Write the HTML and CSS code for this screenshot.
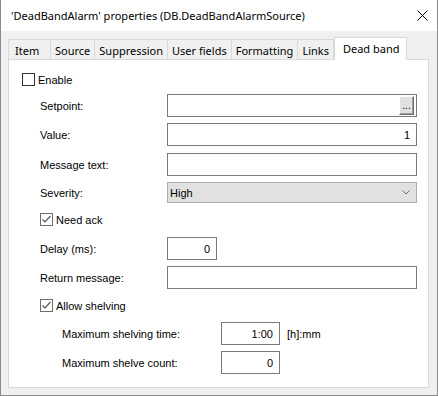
FILE: index.html
```html
<!DOCTYPE html>
<html lang="en">
<head>
  <meta charset="UTF-8" />
  <title>'DeadBandAlarm' properties</title>
  <link rel="stylesheet" href="styles.css">
</head>
<body>
  <div class="window">
    <div class="titlebar">
      <span class="title">'DeadBandAlarm' properties (DB.DeadBandAlarmSource)</span>
      <svg class="close" width="11" height="11" viewBox="0 0 11 11">
        <path d="M0.5 0.5L10.5 10.5M10.5 0.5L0.5 10.5" stroke="#000" stroke-width="1" fill="none" />
      </svg>
    </div>

    <div class="client">
      <div class="tabs">
        <div class="tab first">Item</div>
        <div class="tab">Source</div>
        <div class="tab">Suppression</div>
        <div class="tab">User fields</div>
        <div class="tab">Formatting</div>
        <div class="tab">Links</div>
        <div class="tab active">Dead band</div>
      </div>

      <div class="panel">
        <div class="row check-row">
          <span class="check"></span><span class="check-label">Enable</span>
        </div>

        <div class="row field-row gap-8">
          <label class="lbl">Setpoint:</label>
          <div class="input-wrap wide">
            <input type="text" class="bare" />
            <button type="button" class="browse">...</button>
          </div>
        </div>

        <div class="row field-row">
          <label class="lbl">Value:</label>
          <input type="text" class="input wide num" value="1" />
        </div>

        <div class="row field-row gap-7">
          <label class="lbl">Message text:</label>
          <input type="text" class="input wide" />
        </div>

        <div class="row combo-row">
          <label class="lbl">Severity:</label>
          <div class="combo wide">
            <span>High</span>
            <svg width="8" height="5" viewBox="0 0 8 5">
              <path d="M0.5 0.5L4 4L7.5 0.5" stroke="#6d6d6d" stroke-width="1" fill="none" />
            </svg>
          </div>
        </div>

        <div class="row check-row gap-10 indent">
          <span class="check on">
            <svg width="11" height="11" viewBox="0 0 11 11"><path d="M1.5 5.5L4 8L9.5 2" stroke="#555" stroke-width="1.2" fill="none" /></svg>
          </span><span class="check-label">Need ack</span>
        </div>

        <div class="row field-row gap-11">
          <label class="lbl">Delay (ms):</label>
          <input type="text" class="input short num" value="0" />
        </div>

        <div class="row field-row">
          <label class="lbl">Return message:</label>
          <input type="text" class="input wide" />
        </div>

        <div class="row check-row gap-10 indent">
          <span class="check on">
            <svg width="11" height="11" viewBox="0 0 11 11"><path d="M1.5 5.5L4 8L9.5 2" stroke="#555" stroke-width="1.2" fill="none" /></svg>
          </span><span class="check-label">Allow shelving</span>
        </div>

        <div class="row field-row gap-10">
          <label class="sub-lbl">Maximum shelving time:</label>
          <input type="text" class="input mid num" value="1:00" />
          <span class="unit">[h]:mm</span>
        </div>

        <div class="row field-row">
          <label class="sub-lbl">Maximum shelve count:</label>
          <input type="text" class="input mid num" value="0" />
        </div>
      </div>
    </div>
  </div>
</body>
</html>
```

FILE: styles.css
```css
body {
  margin: 0;
  font-family: "Liberation Sans", Arial, sans-serif;
  font-size: 11px;
  color: #000;
}

.window {
  width: 438px;
  height: 396px;
  box-sizing: border-box;
  border: 1px solid #8a8a8a;
  border-top: none;
  background: #f0f0f0;
  display: flex;
  flex-direction: column;
}

.titlebar {
  height: 31px;
  background: #fff;
  display: flex;
  align-items: center;
  justify-content: space-between;
  padding: 0 9px 0 10px;
}

.title {
  font-family: "Noto Sans", sans-serif;
  font-size: 11px;
}

.client {
  flex: 1;
  display: flex;
  flex-direction: column;
  padding: 6px 8px 7px 7px;
}

/* tab strip */
.tabs {
  display: flex;
  align-items: flex-end;
  height: 22px;
  position: relative;
  z-index: 1;
}

.tab {
  flex-shrink: 0;
  white-space: nowrap;
  height: 20px;
  box-sizing: border-box;
  border: 1px solid #d9d9d9;
  border-bottom: none;
  margin-left: -1px;
  padding: 1px 4px 0;
  display: flex;
  align-items: center;
  font-family: "Noto Sans", sans-serif;
  font-size: 11px;
  background: #f0f0f0;
}

.tab.first {
  margin-left: 0;
  width: 43px;
  padding-left: 6px;
}

.tab.active {
  height: 23px;
  margin-bottom: -1px;
  margin-left: 0;
  background: #fff;
  padding: 0 7px 2px 8px;
}

/* page */
.panel {
  flex: 1;
  box-sizing: border-box;
  border: 1px solid #d9d9d9;
  background: #fff;
  padding: 13px 0 0 13px;
}

.row {
  display: flex;
  align-items: center;
  margin-top: 6px;
}

.row:first-child { margin-top: 0; }
.gap-7 { margin-top: 7px; }
.gap-8 { margin-top: 8px; }
.gap-10 { margin-top: 10px; }
.gap-11 { margin-top: 11px; }

.check-row { height: 13px; }
.field-row { height: 23px; }
.combo-row { height: 21px; }

.indent { margin-left: 18px; }

.check {
  width: 13px;
  height: 13px;
  box-sizing: border-box;
  border: 1px solid #333;
  background: #fff;
  display: inline-flex;
}

.check.on {
  border-color: #6d6d6d;
}

.check-label {
  margin-left: 3px;
}

.lbl {
  width: 127px;
  margin-left: 18px;
}

.sub-lbl {
  width: 159px;
  margin-left: 40px;
}

.input, .input-wrap {
  box-sizing: border-box;
  height: 23px;
  border: 1px solid #7a7a7a;
  background: #fff;
  font: inherit;
  padding: 0 6px;
  outline: none;
}

.num { text-align: right; }

.wide { width: 250px; }
.short { width: 50px; }
.mid { width: 59px; }

.input-wrap {
  display: flex;
  align-items: center;
  padding: 0 2px 0 0;
}

.bare {
  flex: 1;
  min-width: 0;
  border: none;
  outline: none;
  font: inherit;
  height: 19px;
}

.browse {
  width: 15px;
  height: 19px;
  box-sizing: border-box;
  padding: 0 0 3px;
  border: 1px solid;
  border-color: #fff #6d6d6d #6d6d6d #fff;
  box-shadow: inset -1px -1px 0 #a0a0a0;
  background: #e1e1e1;
  font: inherit;
  font-size: 10px;
  line-height: 1;
  display: flex;
  align-items: flex-end;
  justify-content: center;
}

.combo {
  box-sizing: border-box;
  height: 21px;
  border: 1px solid #adadad;
  background: #e1e1e1;
  display: flex;
  align-items: center;
  justify-content: space-between;
  padding: 0 6px 0 2px;
}

.unit {
  margin-left: 7px;
}
```
